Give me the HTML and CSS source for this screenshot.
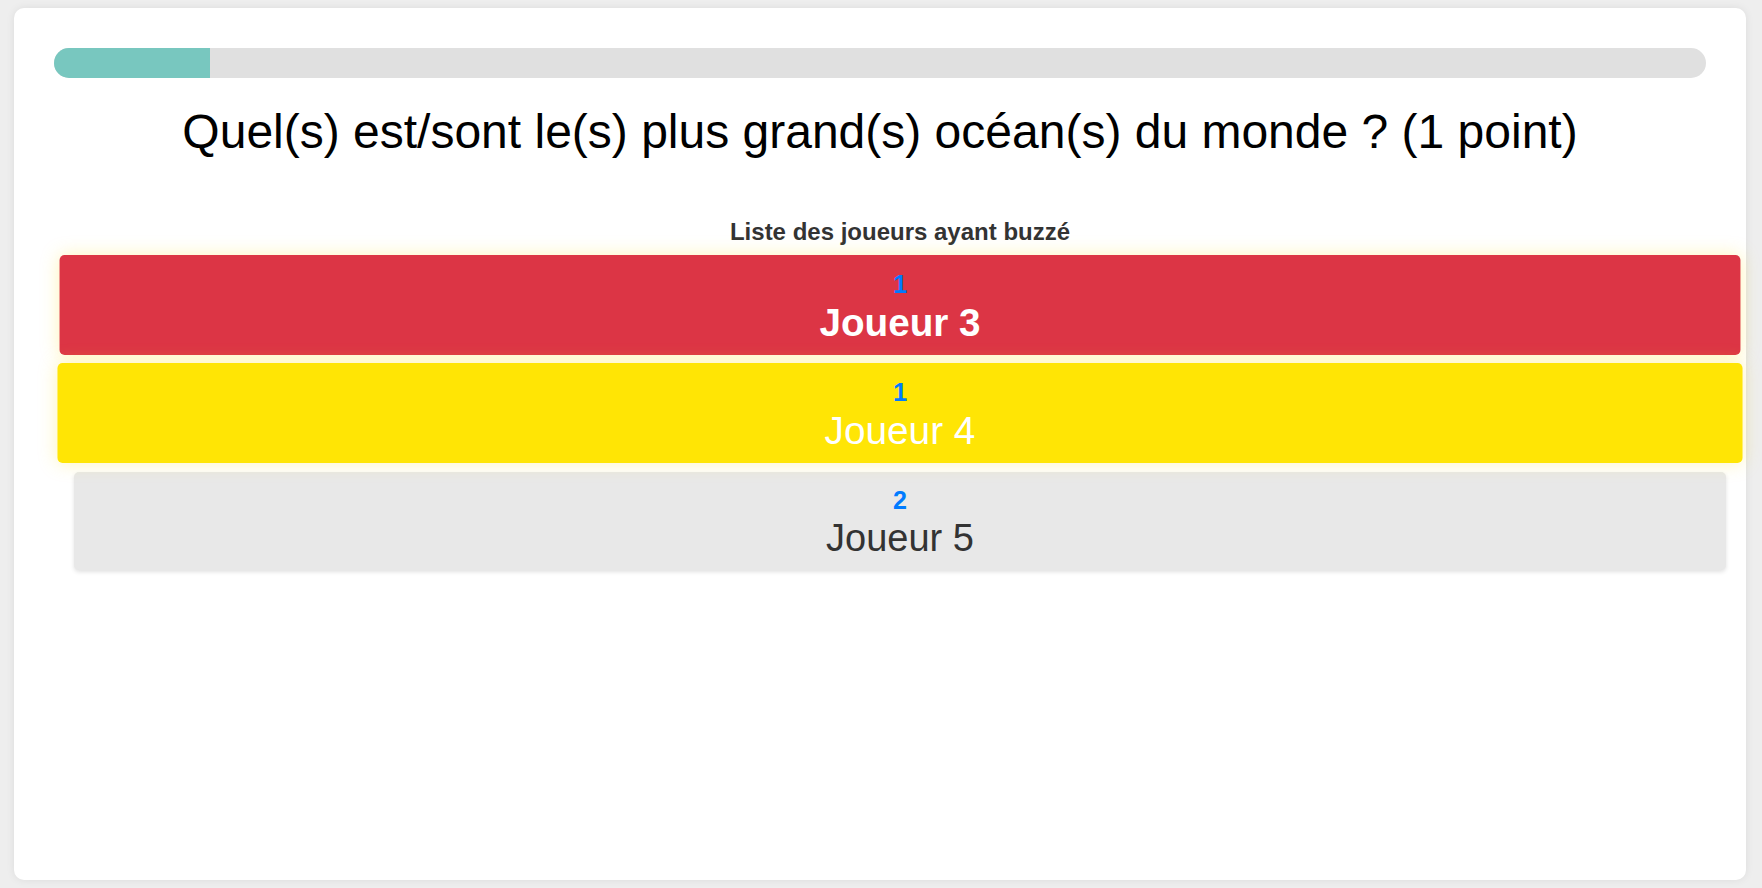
FILE: index.html
```html
<!DOCTYPE html>
<html lang="fr">
<head>
<meta charset="utf-8">
<title>Quiz</title>
<link rel="stylesheet" href="styles.css">
</head>
<body>
<main class="card">
  <div class="progress"><div class="progress-fill" style="width: 9.45%"></div></div>
  <h1 class="question">Quel(s) est/sont le(s) plus grand(s) océan(s) du monde ? (1 point)</h1>
  <section class="buzz">
    <h2 class="buzz-title">Liste des joueurs ayant buzzé</h2>
    <ul class="buzz-list">
      <li class="player player-red"><span class="rank">1</span><span class="name name-bold">Joueur 3</span></li>
      <li class="player player-yellow"><span class="rank">1</span><span class="name">Joueur 4</span></li>
      <li class="player player-gray"><span class="rank">2</span><span class="name">Joueur 5</span></li>
    </ul>
  </section>
</main>
</body>
</html>
```

FILE: styles.css
```css
* { box-sizing: border-box; }
html, body { height: 100%; }
body {
  margin: 0;
  padding: 8px 16px 8px 14px;
  background: #eeeeee;
  font-family: "Liberation Sans", Arial, sans-serif;
  color: #333;
}
.card {
  height: 100%;
  background: #fff;
  border-radius: 10px;
  box-shadow: 0 0 8px rgba(0,0,0,0.08);
  padding: 40px 40px;
}
.progress {
  height: 30px;
  background: #e0e0e0;
  border-radius: 15px;
  overflow: hidden;
}
.progress-fill {
  height: 100%;
  background: #78c7bf;
}
.question {
  margin: 26px 0 0;
  font-size: 48px;
  font-weight: normal;
  color: #000;
  text-align: center;
  line-height: normal;
}
.buzz {
  margin: 59px -20px 0 20px;
}
.buzz-title {
  margin: 0;
  font-size: 24px;
  font-weight: bold;
  color: #333;
  text-align: center;
  line-height: normal;
}
.buzz-list {
  list-style: none;
  margin: 10px 0 0;
  padding: 0;
  display: flex;
  flex-direction: column;
  gap: 10px;
}
.player {
  height: 98px;
  padding: 14px 0 0;
  border-radius: 5px;
  display: flex;
  flex-direction: column;
  align-items: center;
  text-align: center;
}
.player-red {
  background: #dc3545;
  transform: scale(1.0175, 1.02);
  box-shadow: 0 0 18px rgba(255, 225, 60, 0.35);
}
.player-yellow {
  background: #ffe505;
  transform: scale(1.02);
  box-shadow: 0 0 18px rgba(255, 225, 60, 0.35);
}
.player-gray {
  background: #e8e8e8;
  box-shadow: 0 2px 4px rgba(0,0,0,0.12);
}
.rank {
  font-size: 25px;
  font-weight: bold;
  color: #007bff;
  line-height: normal;
}
.name {
  margin-top: 2px;
  font-size: 38px;
  line-height: normal;
  color: #fff;
}
.name-bold { font-weight: bold; }
.player-gray .name { color: #333; }
```
